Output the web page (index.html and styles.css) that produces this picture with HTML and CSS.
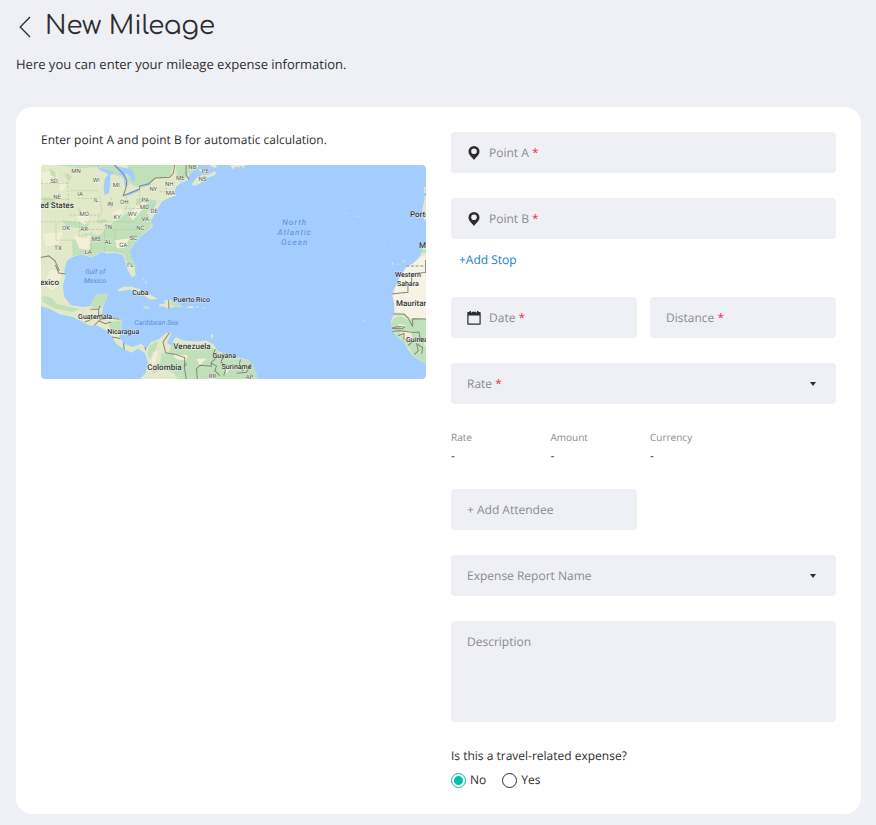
FILE: index.html
```html
<!DOCTYPE html>
<html lang="en">
<head>
<meta charset="utf-8">
<meta name="viewport" content="width=device-width, initial-scale=1">
<title>New Mileage</title>
<link rel="stylesheet" href="styles.css">
</head>
<body>
<header class="page-header">
  <div class="title-row">
    <button class="back" type="button" aria-label="Back">
      <svg width="12" height="22" viewBox="0 0 12 22" fill="none" stroke="currentColor" stroke-width="1.3"><path d="M11 1 1.2 11 11 21"/></svg>
    </button>
    <h1>New Mileage</h1>
  </div>
  <p class="intro">Here you can enter your mileage expense information.</p>
</header>
<main class="card">
  <section class="map-panel">
    <p class="hint">Enter point A and point B for automatic calculation.</p>
    <svg class="map" viewBox="41 165 384 213" preserveAspectRatio="xMidYMid slice" role="img" aria-label="Map">
      <rect class="sea" x="30" y="155" width="410" height="235"/>
      <!-- North America -->
      <g transform="translate(36 160) scale(.3333)">
        <path class="land" d="M0 0H480L486 24 468 34 458 48 455 60 435 68 420 80 414 95 419 108 400 112 377 124 371 135 362 150 350 172 343 180 350 200 335 212 318 225 300 243 288 258 279 272 284 292 295 312 298 345 287 351 274 330 268 305 260 285 240 278 215 280 195 275 180 285 165 292 135 283 110 290 92 302 85 330 88 350 80 376 85 410 105 435 140 440 162 437 172 415 180 403 215 400 210 420 200 440 198 460 215 470 250 475 258 480 255 505 250 530 262 550 290 560 315 550 330 565 328 578 305 565 285 577 262 565 240 550 228 530 210 510 185 497 160 495 140 485 110 470 75 463 40 445 0 432Z"/>
        <path class="green" d="M60 15 235 15 258 40 250 50 215 36 190 20 130 25ZM275 15H412L400 50 355 54 340 70 300 80 276 65 272 35ZM418 15H480L484 25 455 45 436 66 425 62ZM220 195 250 175 290 145 325 135 342 180 346 200 318 222 288 255 278 270 285 290 296 310 290 325 270 302 262 282 240 276 195 274 165 290 135 281 110 288 108 245 145 220 190 225 210 205ZM172 415 180 403 213 401 208 424 192 445 164 438ZM218 485 256 480 252 510 236 520 222 510ZM20 405 45 412 62 430 100 440 130 445 110 455 60 445 20 425ZM80 180 160 190 150 205 90 200ZM300 115 360 120 350 150 325 155 300 135Z"/>
        <path class="pale" d="M15 40 60 30 65 60 25 75ZM75 65 90 72 84 92 68 90ZM120 170 145 150 160 175 145 195ZM20 220 80 215 70 250 30 260ZM230 155 260 145 255 170 235 175ZM40 330 78 330 70 370 50 390 25 375ZM180 55 195 60 188 75ZM235 240 280 235 265 262 240 265ZM115 230 165 225 160 270 130 265ZM275 160 320 125 335 130 290 180Z"/>
        <path class="speck" d="M40 25l18 9 3 20-17-8zM82 40l25 8-8 16zM125 140l12 18-7 10zM210 230l20 10-5 14zM20 110l35 5 2 15-37 6zM180 180l25-4 10 8-28 7z"/>
        <path class="sea" d="M206 106 202 82 206 56 217 42 194 32 184 22 210 28 239 38 222 46 222 74 218 98ZM232 16 255 22 286 28 298 55 290 68 282 48 269 38 272 62 279 72 267 82 262 56 246 35ZM261 107 288 94 308 87 306 94 280 106ZM303 80 335 68 345 74 315 82ZM373 122 363 124 352 142 352 158 346 151 352 132ZM180 16 188 16 188 25Z"/>
        <path class="land" d="M465 74 478 56 496 44 518 44 532 34 541 38 532 47 510 54 490 72 472 77ZM487 26 513 30 510 38 490 34ZM520 15h20v9l-12-2zM582 15h26v8l-12-4-6 7z"/>
        <path class="state" d="M15 70H95M15 118H100M95 40 98 150M15 185H125M125 115H180M105 92H185M145 185H300M100 165H190M130 185V230H155M165 215V282M205 210V275M235 210 240 270M155 208H300M190 110 198 155 185 175M225 112V145M270 110V145M265 145H335M310 90V130M390 60V90M370 95H410M60 190V240H115"/>
        <path class="border" d="M234 14 260 40 272 60 269 84 261 107 310 87V78L338 71 357 54 400 52 411 40 415 14M449 14V45L458 58M15 292 38 287 57 302 70 332M58 314 68 338 88 341M163 447H187L192 437M188 445 187 470M147 485 165 477 180 468 201 462M174 496 192 477 222 472 250 477M190 482 207 490 225 485M227 530 252 534M262 548 264 567M326 560 330 572"/>
      </g>
      <!-- Caribbean and South America -->
      <g transform="translate(36 265) scale(.3333)">
        <path class="land" d="M242 74 262 64 286 64 310 72 345 90 366 101 342 103 320 88 280 73 250 78ZM368 118 388 113 382 105 402 104 425 114 438 124 412 125 396 130 384 124 368 123ZM320 123l20 2v5l-16-1zM454 123h18l-3 6-16-1zM318 33l4 9-3 5zM325 45l8 8-5 2zM526 205l5 3-3 11-6-4z"/>
        <path class="green" d="M402 106 420 112 437 122 416 124 405 118ZM300 74 340 90 315 86ZM320 125l18 1v3z"/>
        <path class="land" d="M330 250 345 230 370 220 387 205 403 199 404 208 392 232 409 242 410 226 419 215 440 225 480 228 510 225 533 238 543 256 560 262 585 273 635 282 650 298 657 320 668 350H300L328 323 335 290 326 262Z"/>
        <path class="green" d="M375 262 395 266 405 240 440 245 470 255 530 248 560 270 610 282 635 282 650 298 657 322 668 350H430L412 322 375 310 350 325 348 308 372 290ZM340 240 365 226 358 255 340 282 333 262Z"/>
        <path class="pale" d="M410 268 455 270 448 285 420 281ZM480 280 510 280 490 300ZM560 300 580 306 570 325ZM350 260 365 256 358 292 345 300Z"/>
        <path class="border" d="M400 201 380 230 388 262 415 266 445 276 444 305 450 341M444 305 450 293M483 341 480 310 491 299 525 302 524 292 544 272 531 263 537 251M524 292 540 302 535 315 550 330M560 264 554 290 569 305 562 330M612 282 608 298 620 316M644 295 630 320 600 323M397 105 398 130"/>
        <path class="isle" d="M481 122h4v5h-4zM501 125h5v4h-5z"/>
      </g>
      <!-- Iberia and West Africa -->
      <g transform="translate(230 160) scale(.3333)">
        <path class="land" d="M600 75 578 82 581 115 573 152 580 180 600 182ZM600 235 578 258 567 288 545 310 526 319 518 335 505 355 490 385 482 403 490 430 490 460 480 480 485 510 500 530 520 545 530 565 550 590 600 618Z"/>
        <path class="sand" d="M600 275 570 290 545 312 527 320 506 350 488 400 492 455 520 458 540 473 600 473Z"/>
        <path class="green" d="M600 478 548 474 532 480 508 468 488 475 482 485 487 508 503 526 530 553 550 588 600 618ZM571 268h20v10h-20zM581 85h15v20h-15z"/>
        <path class="pale" d="M505 515 540 510 545 540 520 535ZM580 540 600 540 600 560 582 558ZM500 490 525 496 510 505Z"/>
        <path class="border dashed" d="M526 317H585V299"/>
        <path class="border" d="M600 337H583L542 340V371L531 375V396L482 401M488 461 520 462 532 474 545 498 545 475 600 476M484 502 505 498 520 500 515 505 484 504M484 513 505 511 550 516 564 515 567 533 585 538M501 526 519 519 519 537M530 556 550 540M550 582 562 571 557 550 575 561 572 580M580 104H600M584 338 584 299"/>
        <path class="isle" d="M482 305l7 5-4 4zM500 308l3 5-5 1zM516 302l5-6v7l-6 4zM343 158h4v3h-4zM378 167h5v3h-5zM399 478h3v5h-3zM481 244h3v3h-3z"/>
      </g>
      <path class="land" d="M230 165h15l-2 3-2-2-6 1-3 2z"/>
      <g class="state-name">
        <text x="76" y="173">MN</text><text x="54" y="183">SD</text><text x="96" y="182">WI</text><text x="116" y="187">MI</text>
        <text x="57" y="199">NE</text><text x="80" y="196">IA</text><text x="96" y="202">IL</text><text x="110" y="206">IN</text><text x="124" y="204">OH</text>
        <text x="153" y="191">NY</text><text x="169" y="186">NH</text><text x="180" y="180">ME</text><text x="170" y="195">MA</text><text x="192" y="169">NB</text><text x="205" y="173">PE</text><text x="202" y="181">NS</text>
        <text x="145" y="202">PA</text><text x="144" y="209">MD</text><text x="154" y="213">DE</text><text x="84" y="216">MO</text><text x="117" y="219">KY</text><text x="132" y="216">WV</text><text x="145" y="221">VA</text>
        <text x="66" y="230">OK</text><text x="84" y="231">AR</text><text x="108" y="229">TN</text><text x="140" y="230">NC</text><text x="96" y="241">MS</text><text x="108" y="244">AL</text><text x="133" y="240">SC</text><text x="123" y="247">GA</text>
        <text x="58" y="250">TX</text><text x="88" y="254">LA</text><text x="130" y="267">FL</text><text x="212" y="377">RR</text><text x="249" y="378">AP</text>
      </g>
      <g class="country">
        <text x="40" y="208">ed States</text><text x="40" y="285">exico</text><text x="173" y="349">Venezuela</text><text x="147" y="369">Colombia</text>
        <text x="409" y="217">Portu</text><text x="418" y="248">M</text><text x="395" y="306">Mauritan</text>
      </g>
      <g class="country small">
        <text x="132" y="295">Cuba</text><text x="173" y="302">Puerto Rico</text><text x="78" y="319">Guatemala</text><text x="107" y="334">Nicaragua</text>
        <text x="212" y="358">Guyana</text><text x="221" y="368">Suriname</text><text x="394" y="277">Western</text><text x="396" y="286">Sahara</text><text x="405" y="342">Guinea</text>
      </g>
      <g class="water-name">
        <text x="95" y="274">Gulf of</text><text x="95" y="283">Mexico</text><text x="156" y="325">Caribbean Sea</text>
      </g>
      <g class="water-name ocean">
        <text x="294" y="225">North</text><text x="294" y="235">Atlantic</text><text x="294" y="245">Ocean</text>
      </g>
    </svg>
  </section>
  <form class="form">
    <div class="field">
      <svg class="icon" width="14" height="14" viewBox="0 0 14 14" aria-hidden="true"><path fill="currentColor" fill-rule="evenodd" d="M7 0a5.500 5.500 0 0 0-5.500 5.500C1.500 8.700 4.500 10.800 7 14c2.500-3.200 5.500-5.300 5.500-8.500A5.500 5.500 0 0 0 7 0Zm0 2.500a2.800 2.800 0 1 1 0 5.600 2.800 2.800 0 0 1 0-5.600Z"/></svg>
      <label for="point-a">Point A <span class="req">*</span></label>
      <input id="point-a" type="text" required>
    </div>
    <div class="field">
      <svg class="icon" width="14" height="14" viewBox="0 0 14 14" aria-hidden="true"><path fill="currentColor" fill-rule="evenodd" d="M7 0a5.500 5.500 0 0 0-5.500 5.500C1.500 8.700 4.500 10.800 7 14c2.500-3.200 5.500-5.300 5.500-8.500A5.500 5.500 0 0 0 7 0Zm0 2.500a2.800 2.800 0 1 1 0 5.600 2.800 2.800 0 0 1 0-5.600Z"/></svg>
      <label for="point-b">Point B <span class="req">*</span></label>
      <input id="point-b" type="text" required>
    </div>
    <button class="add-stop" type="button">+Add Stop</button>
    <div class="pair">
      <div class="field">
        <svg class="icon" width="14" height="14" viewBox="0 0 14 14" aria-hidden="true"><path fill="currentColor" fill-rule="evenodd" d="M1 1H2.500V0H4V1.500H5V.8H9V1.500H10V0H11.500V1H13Q13.700 1 13.700 1.700V13Q13.700 13.700 13 13.700H1Q.3 13.700 .3 13V1.700Q.3 1 1 1ZM1.500 4.500V12.500H12.500V4.500Z"/></svg>
        <label for="date">Date <span class="req">*</span></label>
        <input id="date" type="text" required>
      </div>
      <div class="field">
        <label for="distance">Distance <span class="req">*</span></label>
        <input id="distance" type="text" required>
      </div>
    </div>
    <div class="field">
      <label for="rate">Rate <span class="req">*</span></label>
      <select id="rate" required><option value=""></option></select>
    </div>
    <dl class="summary">
      <div><dt>Rate</dt><dd>-</dd></div>
      <div><dt>Amount</dt><dd>-</dd></div>
      <div><dt>Currency</dt><dd>-</dd></div>
    </dl>
    <div class="pair">
      <button class="field attendee" type="button">+ Add Attendee</button>
    </div>
    <div class="field">
      <label for="report">Expense Report Name</label>
      <select id="report"><option value=""></option></select>
    </div>
    <textarea class="description" aria-label="Description" placeholder="Description"></textarea>
    <fieldset class="travel">
      <legend>Is this a travel-related expense?</legend>
      <div class="choices">
        <label><input type="radio" name="travel" value="no" checked>No</label>
        <label><input type="radio" name="travel" value="yes">Yes</label>
      </div>
    </fieldset>
  </form>
</main>
</body>
</html>
```
FILE: styles.css
```css
* {
  box-sizing: border-box;
}

body {
  margin: 0;
  padding: 8px 15px 12px 16px;
  background: #eff0f6;
  color: #2d2d2f;
  font: 12px/18px "Open Sans", sans-serif;
  text-rendering: geometricPrecision;
}

h1, p, dl, dd {
  margin: 0;
}

button, input, select, textarea {
  margin: 0;
  border: 0;
  background: transparent;
  color: inherit;
  font: inherit;
  text-rendering: inherit;
}

button {
  cursor: pointer;
}

.page-header {
  margin-bottom: 32px;
}

.title-row {
  display: flex;
  align-items: center;
  gap: 14px;
  height: 36px;
}

.back {
  display: flex;
  padding: 2px 0 0 3px;
}

h1 {
  padding-top: 2px;
  font: 400 26px/36px Comfortaa, Quicksand, Lato, sans-serif;
}

.intro {
  margin-top: 10px;
  font-size: 13px;
  line-height: 21px;
}

.card {
  display: grid;
  grid-template-columns: 1fr 1fr;
  gap: 25px;
  padding: 25px;
  border-radius: 16px;
  background: #fff;
}

.hint {
  margin: -1px 0 16px;
}

.map {
  display: block;
  width: 100%;
  border-radius: 4px;
  font-family: Roboto, sans-serif;
}

.sea { fill: #a3ccff; }
.land { fill: #e1e9c8; }
.green { fill: #bfe0b8; }
.pale { fill: #f1f0d6; }
.speck { fill: #c8dfb4; }
.sand { fill: #f6f2e4; }
.isle { fill: #d8e8e0; }

.border {
  fill: none;
  stroke: #85877c;
  stroke-width: 3;
}

.dashed {
  stroke-dasharray: 9 5;
}

.state {
  fill: none;
  stroke: #b9c2a0;
  stroke-width: 2;
  stroke-dasharray: 8 4;
}

.state-name {
  fill: #55584f;
  stroke: #fff;
  stroke-width: 1;
  stroke-opacity: .6;
  paint-order: stroke;
  font-size: 6px;
  text-anchor: middle;
}

.country {
  fill: #30332f;
  stroke: #fff;
  stroke-width: 1;
  stroke-opacity: .6;
  paint-order: stroke;
  font-size: 8px;
  font-weight: 500;
}

.small {
  font-size: 7px;
}

.water-name {
  fill: #5b8ed0;
  font-size: 7px;
  font-style: italic;
  text-anchor: middle;
}

.ocean {
  font-size: 8px;
  letter-spacing: 1px;
}

.form {
  display: flex;
  flex-direction: column;
  gap: 25px;
  min-width: 0;
}

.field {
  display: flex;
  align-items: center;
  gap: 8px;
  min-width: 0;
  height: 41px;
  padding: 0 16px;
  border-radius: 4px;
  background: #eff0f6;
}

.field label {
  flex: none;
  color: #8b8b8f;
}

.field input,
.field select {
  flex: 1;
  min-width: 0;
  height: 100%;
  padding: 0;
  outline: 0;
}

.field select {
  appearance: none;
  background: url("data:image/svg+xml,%3Csvg xmlns='http://www.w3.org/2000/svg' width='6' height='4'%3E%3Cpath d='M0 0h6L3 4z' fill='%232d2d2f'/%3E%3C/svg%3E") no-repeat right 4px center;
}

.icon {
  flex: none;
}

.req {
  color: #f2334f;
}

.add-stop {
  align-self: flex-start;
  margin: -13px 0 3px;
  padding: 0 8px;
  color: #1482c8;
}

.pair {
  display: grid;
  grid-template-columns: 1fr 1fr;
  gap: 13px;
}

.attendee {
  color: #8b8b8f;
}

.summary {
  display: grid;
  grid-template-columns: repeat(4, 1fr);
  gap: 13px;
  height: 35px;
}

dt {
  color: #8b8b8f;
  font-size: 10px;
  line-height: 16px;
}

dd {
  margin-top: 2px;
}

.description {
  display: block;
  width: 100%;
  height: 101px;
  padding: 12px 16px;
  border-radius: 4px;
  background: #eff0f6;
  resize: none;
}

.description::placeholder {
  color: #8b8b8f;
  opacity: 1;
}

.travel {
  margin: 0;
  padding: 0;
  border: 0;
}

.travel legend {
  padding: 0;
}

.choices {
  display: flex;
  gap: 16px;
  margin-top: 6px;
}

.choices label {
  display: flex;
  align-items: center;
  gap: 4px;
}

.choices input {
  appearance: none;
  width: 15px;
  height: 15px;
  border: 1px solid #2d2d2f;
  border-radius: 50%;
}

.choices input:checked {
  border-color: #00bfa9;
  background: radial-gradient(circle, #00bfa9 4px, transparent 5px);
}
```
